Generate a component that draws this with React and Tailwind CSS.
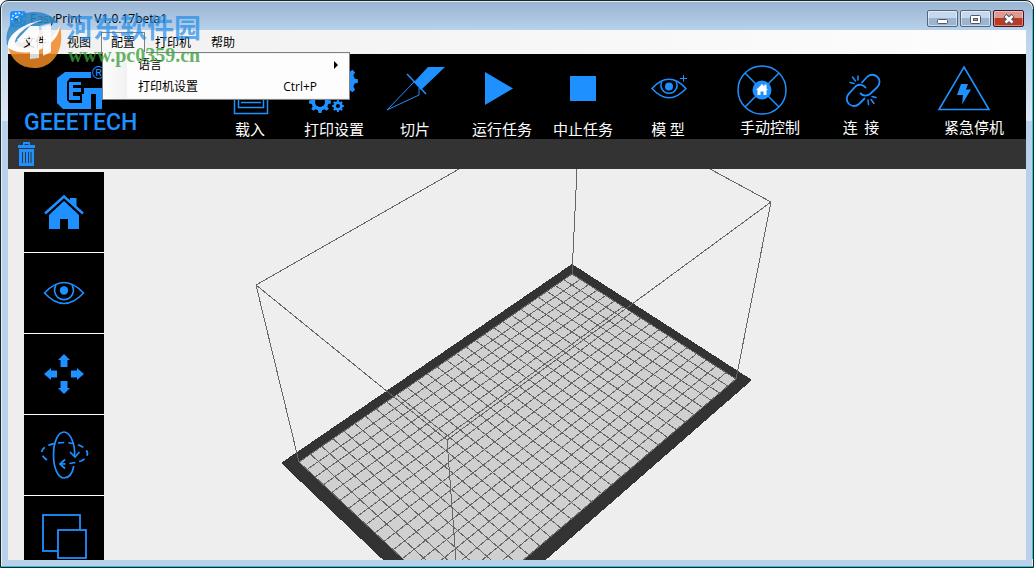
import { useState } from "react";

const BLUE = "#1e90ff";

// corners of the print bed: back, right, front, left
const BED = [[572, 274], [736, 379], [461, 613], [299, 462]];
const COLS = 18;
const ROWS = 28;

// maps (u, v) in 0..1 onto the bed in perspective
function project(u, v) {
    const [[x0, y0], [x1, y1], [x2, y2], [x3, y3]] = BED;
    const ax = x1 - x2, ay = y1 - y2;
    const bx = x3 - x2, by = y3 - y2;
    const sx = x0 - x1 + x2 - x3, sy = y0 - y1 + y2 - y3;
    const den = ax * by - bx * ay;
    const g = (sx * by - bx * sy) / den;
    const h = (ax * sy - sx * ay) / den;
    const w = g * u + h * v + 1;
    const x = ((x1 - x0 + g * x1) * u + (x3 - x0 + h * x3) * v + x0) / w;
    const y = ((y1 - y0 + g * y1) * u + (y3 - y0 + h * y3) * v + y0) / w;
    return `${x.toFixed(1)} ${y.toFixed(1)}`;
}

function gridPath() {
    let d = "";
    for (let i = 0; i <= COLS; i++) {
        d += `M${project(i / COLS, 0)}L${project(i / COLS, 1)}`;
    }
    for (let j = 0; j <= ROWS; j++) {
        d += `M${project(0, j / ROWS)}L${project(1, j / ROWS)}`;
    }
    return d;
}

function gear(cx, cy, r, teeth) {
    const pts = [];
    for (let i = 0; i < teeth; i++) {
        [[-0.3, 0.78], [-0.17, 1], [0.17, 1], [0.3, 0.78]].forEach(([o, k]) => {
            const a = ((i + o) / teeth) * Math.PI * 2;
            pts.push(`${(cx + Math.cos(a) * r * k).toFixed(2)},${(cy + Math.sin(a) * r * k).toFixed(2)}`);
        });
    }
    return pts.join(" ");
}

function Gear({ cx, cy, r, hole, teeth }) {
    return (
        <>
            <polygon points={gear(cx, cy, r, teeth)} fill={BLUE} />
            <circle cx={cx} cy={cy} r={hole} fill="#000" />
        </>
    );
}

const tools = [
    {
        name: "载入",
        icon: (
            <g fill="none" stroke={BLUE} strokeWidth="1.5">
                <rect x="24.5" y="8" width="33" height="43.5" />
                <rect x="28.5" y="14" width="25" height="31.5" />
                <path d="M31 40.5H51" />
            </g>
        ),
    },
    {
        name: "打印设置",
        icon: (
            <>
                <Gear cx={50} cy={19} r={14} hole={5} teeth={8} />
                <Gear cx={26} cy={40} r={11} hole={5} teeth={8} />
                <Gear cx={44} cy={44} r={6} hole={2} teeth={8} />
            </>
        ),
    },
    {
        name: "切片",
        icon: (
            <>
                <path d="M53 5H70L46 28L39 20Z" fill={BLUE} />
                <path d="M32 12L51 32" stroke={BLUE} strokeWidth="1.5" />
                <path d="M39 20L12 48L44 33V26" fill="none" stroke={BLUE} />
            </>
        ),
    },
    { name: "运行任务", icon: <path d="M23 10L51 26.5L23 43Z" fill={BLUE} /> },
    { name: "中止任务", icon: <rect x="27" y="14" width="26" height="25" fill={BLUE} /> },
    {
        name: "模 型",
        icon: (
            <>
                <g fill="none" stroke={BLUE} strokeWidth="1.5">
                    <path d="M24 26.5Q41 8 58 26.5Q41 45 24 26.5Z" />
                    <path d="M34 19.5A8 8 0 1 0 48 19.5" />
                    <path d="M55.5 13V19.5M52 16.5H59" strokeWidth="1" />
                </g>
                <circle cx="41" cy="24.5" r="4" fill={BLUE} />
            </>
        ),
    },
    {
        name: "手动控制",
        high: true,
        icon: (
            <>
                <g fill="none" stroke={BLUE} strokeWidth="1.5">
                    <circle cx="32" cy="28" r="24" />
                    <path d="M15 11L49 45M49 11L15 45" />
                </g>
                <circle cx="32" cy="28" r="9.5" fill={BLUE} />
                <path d="M32 22L38 28H36.5V33H33.5V29.5H30.5V33H27.5V28H26ZM34.5 22.5H36.5V26.5L34.5 24.5Z" fill="#fff" />
            </>
        ),
    },
    {
        name: "连  接",
        high: true,
        icon: (
            <g fill="none" stroke={BLUE} strokeWidth="1.8" strokeLinecap="round">
                <path d="M41 20.5L46 15A7 7 0 0 1 56.5 25L49 32A7 7 0 0 1 39.5 31.5" />
                <path d="M44.5 25.5A7 7 0 0 0 35 24L28 31.5A7 7 0 0 0 38 42L43.5 36.5" />
                <path d="M37 14V18M31.5 15L34.5 19M29 20.5L33 21.5M47.5 42.5L47 38M53 41.5L50 37.5M55 35.5L51 34.5" strokeWidth="1.5" />
            </g>
        ),
    },
    {
        name: "紧急停机",
        high: true,
        icon: (
            <>
                <path d="M30 5L55 47.5H5Z" fill="none" stroke={BLUE} strokeWidth="1.6" />
                <path d="M27 22H34L32 27.5H37L28 42.5L29 33H23Z" fill={BLUE} />
            </>
        ),
    },
];

const views = [
    {
        name: "主视图",
        icon: (
            <>
                <path d="M40 29L55 43V57H44V47H36V57H25V43Z" fill={BLUE} />
                <path d="M21 41.5L40 24.5L59 41.5" fill="none" stroke={BLUE} strokeWidth="2.5" />
                <path d="M46 26H52.5V35L46 29Z" fill={BLUE} />
            </>
        ),
    },
    {
        name: "查看",
        icon: (
            <>
                <g fill="none" stroke={BLUE} strokeWidth="1.6">
                    <path d="M20.5 40Q40 19 59.5 40Q40 61 20.5 40Z" />
                    <path d="M32 32A9.5 9.5 0 1 0 48 32" />
                </g>
                <circle cx="40" cy="37.5" r="4.2" fill={BLUE} />
            </>
        ),
    },
    {
        name: "移动",
        icon: (
            <g fill={BLUE}>
                <path d="M40 20L46 26H43.5V33H36.500V26H34Z" />
                <path d="M40 60L46 54H43.5V47H36.500V54H34Z" />
                <path d="M20 40L27 34V36.500H33V43.500H27V46Z" />
                <path d="M60 40L53 34V36.500H47V43.500H53V46Z" />
            </g>
        ),
    },
    {
        name: "旋转",
        icon: (
            <g fill="none" stroke={BLUE} strokeWidth="1.7">
                <path d="M50.5 41C51.5 29 46 17 40 17C34 17 29.5 27 29.5 40C29.5 53 34 63 40 63C45 63 48.5 58 49.8 51" />
                <path d="M46 37L51 42L55.5 37" />
                <path d="M23 45C11 37 20 28 40 27.5C61 28 71 39 57 46C51 48 44 49 36 49" strokeDasharray="6 4" />
                <path d="M41 44.5L36 49L41 53.5" />
            </g>
        ),
    },
    {
        name: "缩放",
        icon: (
            <g fill="#000" stroke={BLUE} strokeWidth="1.8">
                <rect x="19" y="19" width="37" height="36" />
                <rect x="34" y="34" width="28" height="28" />
            </g>
        ),
    },
];

const menus = ["文件", "视图", "配置", "打印机", "帮助"];

function TitleBar() {
    return (
        <header className="flex h-[29px] shrink-0 items-start pr-0.5">
            <div className="flex flex-1 items-center gap-1 pt-2 pl-0.5 font-['Open_Sans','Noto_Sans_CJK_SC',sans-serif] text-xs leading-5 text-black">
                <svg className="size-4" viewBox="0 0 16 16">
                    <rect width="16" height="16" rx="3" fill={BLUE} />
                    <circle cx="8" cy="8" r="6" fill="none" stroke="#fff" strokeWidth="1.5" strokeDasharray="1.5 2" />
                    <path d="M5 6L8 5L10 7V11L6 11Z" fill="#fff" />
                    <path d="M5 7L8 8V11L5 10Z" fill="#123" />
                </svg>
                <h1 className="whitespace-pre">EasyPrint    V1.0.17beta1</h1>
            </div>
            <div className="flex gap-0.5 pt-[9px]">
                <button aria-label="最小化" className="flex h-[17px] w-[31px] items-center justify-center rounded-xs border border-[#53657d] bg-linear-to-b from-[#c6d8ec] from-50% to-[#9bb5d0] to-50% inset-ring inset-ring-white/50">
                    <svg className="h-4 w-5" viewBox="0 0 20 16"><rect x="4.5" y="8.5" width="10" height="4" rx="1" fill="#fff" stroke="#535666" /></svg>
                </button>
                <button aria-label="最大化" className="flex h-[17px] w-[31px] items-center justify-center rounded-xs border border-[#53657d] bg-linear-to-b from-[#c6d8ec] from-50% to-[#9bb5d0] to-50% inset-ring inset-ring-white/50">
                    <svg className="h-4 w-5" viewBox="0 0 20 16">
                        <rect x="4.5" y="4.5" width="10" height="8" rx="1" fill="#fff" stroke="#535666" />
                        <rect x="7.5" y="7.5" width="4" height="2" fill="#9bb5d0" stroke="#535666" />
                    </svg>
                </button>
                <button aria-label="关闭" className="flex h-[17px] w-[31px] items-center justify-center rounded-xs border border-[#431422] bg-linear-to-b from-[#dc9a90] from-50% to-[#bb3a22] to-50% inset-ring inset-ring-white/40">
                    <svg className="h-4 w-5" viewBox="0 0 20 16">
                        <path d="M6 4.5L14 12M14 4.5L6 12" stroke="#535666" strokeWidth="4.5" />
                        <path d="M6.5 5L13.5 11.5M13.5 5L6.5 11.5" stroke="#fff" strokeWidth="2.5" />
                    </svg>
                </button>
            </div>
        </header>
    );
}

function ConfigMenu() {
    return (
        <div className="absolute top-[19px] left-0 z-20 w-[248px] border border-[#808080] bg-linear-to-r from-[#fcfcfc] to-[#f1f1f1] to-[25px] py-px">
            <div className="absolute -top-px left-0 h-px w-[43px] bg-[#f8f8f8]"></div>
            <div className="ml-6 bg-[#fdfdfd]">
                <button className="flex h-[22px] w-full items-center justify-between pr-2.5 pl-[11px]">
                    <span>语言</span>
                    <svg className="h-2 w-1.5" viewBox="0 0 6 8"><path d="M1 0L5 4L1 8Z" /></svg>
                </button>
                <button className="flex h-[22px] w-full items-center justify-between pr-8 pl-[11px]">
                    <span>打印机设置</span>
                    <span>Ctrl+P</span>
                </button>
            </div>
        </div>
    );
}

function MenuBar() {
    const [open, setOpen] = useState("配置");

    return (
        <nav className="flex h-6 shrink-0 bg-linear-to-r from-[#f0f0f0] to-[#fdfdfd] px-[5px] pt-0.5 font-['Open_Sans','Noto_Sans_CJK_SC',sans-serif] text-xs text-black">
            {menus.map((name) => (
                <div key={name} className={open === name ? "relative border border-b-0 border-[#808080] bg-[#f8f8f8]" : "relative border border-b-0 border-transparent"}>
                    <button onClick={() => setOpen(open === name ? "" : name)} className="h-5 px-[9px]">{name}</button>
                    {name === "配置" && open === name && <ConfigMenu />}
                </div>
            ))}
        </nav>
    );
}

function Logo() {
    return (
        <div className="pt-2.5 pl-4">
            <svg className="h-[46px] w-[116px]" viewBox="0 0 116 46">
                <path d="M67 8H41L33 14V39L39 45H67V30H58V39H46L43 36V18L46 14H67Z" fill={BLUE} />
                <path d="M57 18H45V36H56V32H49V28H57V24H49V21H57Z" fill={BLUE} />
                <path d="M60 24H82V30H78V45H72V30H60Z" fill={BLUE} />
                <text x="68" y="15" fontSize="18" fill={BLUE} fontFamily="Liberation Sans, sans-serif">®</text>
            </svg>
            <div className="font-[Roboto,sans-serif] text-[23px] leading-[26px] font-medium text-[#1e90ff]">GEEETECH</div>
        </div>
    );
}

function Toolbar() {
    return (
        <div className="grid h-[85px] shrink-0 grid-cols-[200fr_84fr_84fr_78fr_96fr_66fr_104fr_100fr_82fr_124fr] overflow-hidden bg-black text-white">
            <Logo />
            {tools.map((tool) => (
                <button key={tool.name} className="flex min-w-0 flex-col items-center pt-2 last:pl-5">
                    <svg className="h-14 w-20 shrink-0 overflow-visible" viewBox="0 0 80 56">{tool.icon}</svg>
                    <span className={tool.high ? "text-[15px] leading-[18px] whitespace-pre" : "text-[15px] leading-[22px] whitespace-pre"}>{tool.name}</span>
                </button>
            ))}
        </div>
    );
}

function Scene() {
    return (
        <svg className="block h-full w-full" viewBox="104 169 922 391" preserveAspectRatio="xMidYMin slice" shapeRendering="crispEdges">
            <path d="M572 264L752 380L461 634L281 463Z" fill="#333" />
            <path d="M572 274L736 379L461 613L299 462Z" fill="#d0d0d0" />
            <path d={gridPath()} fill="none" stroke="#666" />
            <g fill="none" stroke="#666">
                <path d="M459 169L256 285L447 440L771 202L710 169" />
                <path d="M256 285L299 462M771 202L736 379M577 169L572 274M447 440L456 560" />
            </g>
        </svg>
    );
}

function Watermark() {
    return (
        <div className="pointer-events-none absolute top-2.5 left-1 z-30 flex items-start">
            <svg className="h-[58px] w-[60px] opacity-85" viewBox="0 0 60 58">
                <path d="M2 34C-1 14 12 1 30 1C40 1 48 5 53 12C40 11 26 17 16 27C11 31 6 36 2 34Z" fill="#2b86c5" />
                <path d="M3 36C9 42 46 36 55 15C60 36 50 57 29 57C15 57 6 48 3 36Z" fill="#f08a24" />
                <path d="M3 35C2 26 14 13 38 9C22 14 10 24 10 32C12 41 44 38 55 14C54 36 22 49 3 37Z" fill="#fff" />
                <path d="M12 29L25 15H34V47L25 48V26L17 32Z" fill="#fff" />
                <path d="M36 16L46 13V41L38 45V22Z" fill="#fff" />
            </svg>
            <div className="pl-px">
                <div className="font-['Noto_Sans_CJK_SC',sans-serif] text-[27px] leading-8 font-bold text-[#1e8ce8]/70">河东软件园</div>
                <div className="pl-0.5 font-['Liberation_Serif',serif] text-[20px] leading-6 font-bold text-[#3ca03c]/80">www.pc0359.cn</div>
            </div>
        </div>
    );
}

export default function App() {
    return (
        <div className="h-screen bg-white">
            <div className="relative flex h-full flex-col overflow-hidden rounded-t-lg border border-[#222] bg-[linear-gradient(#98b4d2,#b9d1ea_29px,#dde8f5_120px,#b9d1ea_120px)] px-[7px] pb-[7px] font-['Noto_Sans_CJK_SC',sans-serif] inset-ring inset-ring-[#d9f2fb]">
                <TitleBar />
                <MenuBar />
                <Toolbar />
                <div className="flex h-[30px] shrink-0 items-center bg-[#333] pl-2.5">
                    <button aria-label="删除">
                        <svg className="h-6 w-[18px]" viewBox="0 0 18 24">
                            <path d="M0 3H5V0H12V3H17V6H0Z" fill={BLUE} />
                            <path d="M1 7H16V24H1Z" fill={BLUE} />
                            <path d="M6.5 2H10.5V3H6.5Z" fill="#333" />
                            <path d="M4.5 10V21M7.5 10V21M10.5 10V21M13 10V21" stroke="#333" />
                        </svg>
                    </button>
                </div>
                <main className="flex min-h-0 flex-1 overflow-hidden bg-[#eee]">
                    <aside className="mt-[3px] ml-4 flex w-20 shrink-0 flex-col gap-px bg-white">
                        {views.map((view) => (
                            <button key={view.name} aria-label={view.name} className="size-20 shrink-0 bg-black">
                                <svg className="size-20" viewBox="0 0 80 80">{view.icon}</svg>
                            </button>
                        ))}
                    </aside>
                    <div className="min-w-0 flex-1">
                        <Scene />
                    </div>
                </main>
                <div className="absolute inset-x-0 bottom-0 h-px bg-[#1cc8e8]"></div>
                <div className="absolute inset-y-2 right-0 w-px bg-[#1cc8e8]"></div>
                <Watermark />
            </div>
        </div>
    );
}
